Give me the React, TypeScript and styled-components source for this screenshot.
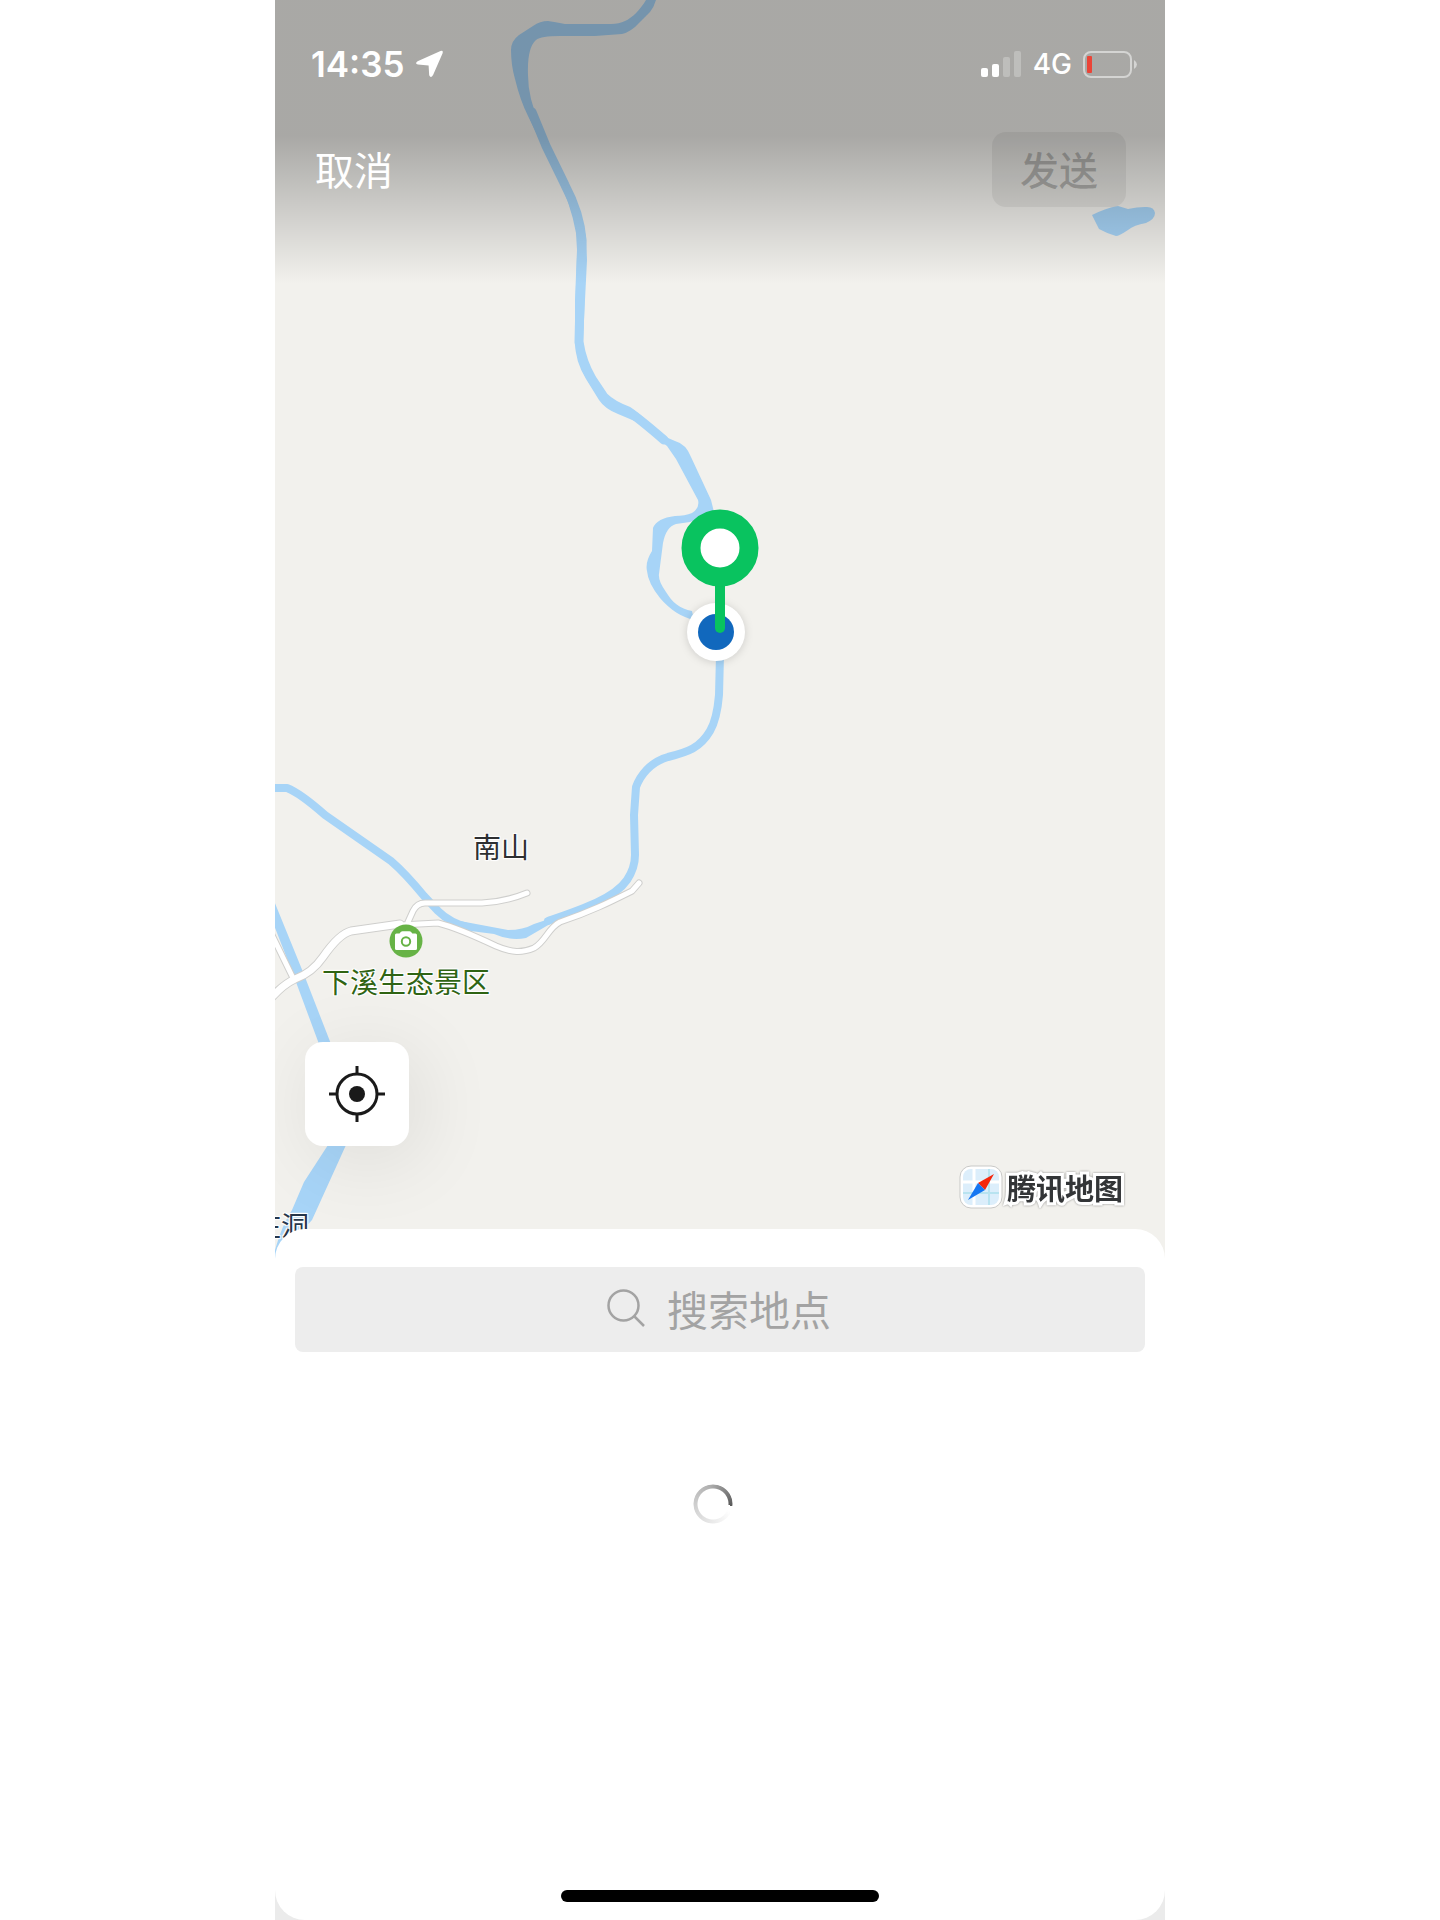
import React from "react";
import styled, { createGlobalStyle, keyframes } from "styled-components";

const GlobalStyle = createGlobalStyle`
  *, *::before, *::after { box-sizing: border-box; }
  body {
    margin: 0;
    background: #fff;
    font-family: Inter, "Noto Sans CJK SC", sans-serif;
    -webkit-font-smoothing: antialiased;
  }
`;

const Screen = styled.main`
  display: flex;
  flex-direction: column;
  width: 100%;
  max-width: 890px;
  min-height: 100vh;
  margin: 0 auto;
  background: #ebebeb;
`;

const MapView = styled.section`
  position: relative;
  display: flex;
  flex-direction: column;
  justify-content: space-between;
  height: 1264px;
  overflow: hidden;
  background: #f2f1ed;
`;

const Terrain = styled.svg`
  position: absolute;
  inset: 0;
  width: 100%;
  height: 100%;
`;

const Header = styled.header`
  position: relative;
  height: 286px;
  padding: 44px 39px 0 36px;
  background: linear-gradient(rgba(0, 0, 0, 0.3) 136px, rgba(0, 0, 0, 0) 284px);
  color: #fff;
`;

const StatusBar = styled.div`
  display: flex;
  align-items: center;
  justify-content: space-between;
  height: 40px;
  margin-right: -11px;
`;

const StatusGroup = styled.div`
  display: flex;
  align-items: center;
  gap: 11px;
`;

const Clock = styled.time`
  font-size: 35px;
  font-weight: 600;
  line-height: 40px;
`;

const Network = styled.span`
  font-size: 28px;
  font-weight: 500;
  line-height: 40px;
`;

const NavBar = styled.nav`
  display: flex;
  align-items: center;
  justify-content: space-between;
  margin-top: 48px;
`;

const NavButton = styled.button<{ $filled?: boolean }>`
  height: 75px;
  padding: 0 ${(p) => (p.$filled ? 28 : 4)}px 4px;
  border: 0;
  border-radius: 14px;
  background: ${(p) => (p.$filled ? "rgba(0, 0, 0, 0.06)" : "transparent")};
  color: ${(p) => (p.$filled ? "rgba(0, 0, 0, 0.22)" : "#fff")};
  font-family: "Noto Sans CJK SC", sans-serif;
  font-size: 39px;
  font-weight: ${(p) => (p.$filled ? 500 : 400)};
  line-height: 56px;
`;

const Place = styled.div<{ $x: number; $y: number; $color: string }>`
  position: absolute;
  left: ${(p) => p.$x}px;
  top: ${(p) => p.$y}px;
  display: flex;
  flex-direction: column;
  align-items: center;
  gap: 3px;
  color: ${(p) => p.$color};
  font-family: "Noto Sans CJK SC", sans-serif;
  font-size: 28px;
  line-height: 40px;
  white-space: nowrap;
  text-shadow: 0 0 2px #fff, 1px 1px 1px #fff, -1px -1px 1px #fff,
    1px -1px 1px #fff, -1px 1px 1px #fff;
  transform: translateX(-50%);
`;

const Marker = styled.svg`
  position: absolute;
  left: 50%;
  top: 500px;
  overflow: visible;
  transform: translateX(-50%);
`;

const MapFooter = styled.div`
  position: relative;
  display: flex;
  align-items: flex-end;
  justify-content: space-between;
  padding: 0 42px 55px 30px;
`;

const LocateButton = styled.button`
  display: grid;
  place-items: center;
  width: 104px;
  height: 104px;
  margin-bottom: 63px;
  padding: 0;
  border: 0;
  border-radius: 18px;
  background: #fff;
  box-shadow: 10px 12px 80px rgba(0, 0, 0, 0.09);
`;

const Brand = styled.div`
  display: flex;
  align-items: center;
  gap: 4px;
  color: #333537;
  font-family: "Noto Sans CJK SC", sans-serif;
  font-size: 29px;
  font-weight: 700;
  line-height: 44px;
`;

const BrandName = styled.span`
  paint-order: stroke fill;
  -webkit-text-stroke: 6px #fff;
  filter: drop-shadow(0 0 1px rgba(0, 0, 0, 0.4));
`;

const Sheet = styled.section`
  position: relative;
  display: flex;
  flex: 1;
  flex-direction: column;
  margin-top: -35px;
  padding: 38px 20px 18px;
  border-radius: 30px;
  background: #fff;
`;

const SearchBar = styled.label`
  display: flex;
  align-items: center;
  justify-content: center;
  gap: 22px;
  height: 85px;
  padding-bottom: 4px;
  border-radius: 8px;
  background: #ededed;
`;

const SearchInput = styled.input`
  width: 166px;
  padding: 0;
  border: 0;
  outline: 0;
  background: transparent;
  color: #1a1a1a;
  font-family: "Noto Sans CJK SC", sans-serif;
  font-size: 41px;
  line-height: 60px;
  &::placeholder {
    color: #a3a3a3;
    opacity: 1;
  }
`;

const Loading = styled.div`
  display: flex;
  flex: 1;
  justify-content: center;
  padding: 132px 14px 0 0;
`;

const spin = keyframes`
  to { transform: rotate(1turn); }
`;

const Spinner = styled.span`
  width: 40px;
  height: 40px;
  border-radius: 50%;
  background: conic-gradient(
    from 95deg,
    rgba(100, 100, 100, 0) 5%,
    rgba(100, 100, 100, 0.25) 40%,
    rgba(100, 100, 100, 0.5) 70%,
    rgba(90, 90, 90, 1) 100%
  );
  mask: radial-gradient(circle, transparent 15px, #000 16px, #000 19px, transparent 20px);
  animation: ${spin} 1s linear infinite paused;
`;

const HomeIndicator = styled.div`
  align-self: center;
  width: 318px;
  height: 12px;
  border-radius: 6px;
  background: #000;
`;

const river = "#a7d4f7";

const streams = [
  { d: "M532 112 L546 146 L565 185 Q580 213 582 240 L580 300 L579 342 Q582 362 592 379 L604 397 Q612 405 628 411 Q641 420 664 440", w: 9 },
  { d: "M720 655 L719 695 Q717 719 710 731 C700 748 688 752 668 757 C650 762 640 776 636 787 L634 815 L635 855 Q635 868 627 880 C614 899 580 910 548 921", w: 8 },
  { d: "M272 788 L287 788 Q300 793 325 815 L391 861 Q405 873 424 896 L438 911 Q450 923 470 928", w: 8 },
];

const roads = [
  { d: "M408 922 L413 911 Q417 903 425 903 L482 903 Q505 902 527 893", w: 5 },
  {
    d: "M400 925 L438 923 Q458 928 496 946 C512 953 522 953 534 948 C546 941 548 928 560 922 C590 912 610 902 632 891 L639 883",
    w: 5,
  },
  { d: "M272 935 L293 978", w: 5 },
  {
    d: "M272 997 Q284 984 295 979 Q312 973 323 957 Q339 934 351 931 L400 924",
    w: 7,
  },
];

const Landscape = () => (
  <Terrain viewBox="275 0 890 1264" preserveAspectRatio="xMidYMin slice" aria-hidden="true">
    <g fill={river}>
      <path d="M646 0 C640 10 632 18 625 21 Q619 24 611 24 L565 24 Q555 22 548 21 Q540 21 533 26 L519 35 Q511 41 511 50 Q511 65 515 79 Q520 100 528 116 L556 174 Q571 204 576 233 L577 250 L575 300 L575 342 Q575 361 586 379 L599 400 Q605 409 618 414 L637 422 Q649 432 667 446 L676 459 L698 500 Q700 508 692 513 Q685 516 675 516 Q657 518 653 528 L652 551 Q645 562 647 571 Q648 583 660 598 C670 610 682 617 694 620 L692 611 C680 609 672 602 666 592 Q658 581 659 574 L663 543 Q666 527 676 524 L690 522 L714 512 L711 500 L691 457 Q686 444 675 441 L668 438 L648 422 Q634 408 626 407 Q613 405 605 395 L595 380 L584 358 L583 340 L585 300 L587 260 L586 236 Q580 213 568 190 L540 125 Q528 98 528 75 Q527 48 536 40 Q541 36 560 36 L595 36 L622 34 Q631 32 640 22 L650 12 Q654 7 656 0 Z" />
      <path d="M1092 215 Q1106 208 1118 206 L1128 209 Q1137 207 1145 207 Q1154 206 1155 213 Q1155 219 1146 223 Q1134 225 1128 230 Q1119 236 1116 236 Q1106 233 1099 229 Z" />
      <path d="M550 924 L526 938 Q510 941 494 934 L463 930 L460 921 L508 930 Q523 930 534 924 L549 919 Z" />
      <path d="M272 896 L303 972 L331 1044 L319 1044 L293 974 L272 920 Z" />
      <path d="M328 1145 L346 1145 L312 1220 Q286 1248 275 1262 L275 1250 Q282 1225 292 1210 L304 1182 Z" />
    </g>
    <g fill="none" stroke={river} strokeLinecap="round" strokeLinejoin="round">
      {streams.map((s) => (
        <path key={s.d} d={s.d} strokeWidth={s.w} />
      ))}
    </g>
    <g fill="none" strokeLinecap="round" strokeLinejoin="round">
      {roads.map((r) => (
        <path key={r.d} d={r.d} stroke="#cfcfcd" strokeWidth={r.w + 2} />
      ))}
      {roads.map((r) => (
        <path key={r.d} d={r.d} stroke="#fff" strokeWidth={r.w} />
      ))}
    </g>
  </Terrain>
);

const LocationArrow = () => (
  <svg width="27" height="28" viewBox="0 0 27 28" aria-hidden="true">
    <path
      d="M24.500 1.100 Q27.400 0 26.600 3.200 L17.200 24.800 Q14.800 29 13.200 25.200 L12.600 15.600 L2 14.600 Q-1.600 13.600 1.600 11.300 Z"
      fill="#fff"
    />
  </svg>
);

const Signal = () => (
  <svg width="41" height="27" viewBox="0 0 41 27" fill="#fff" aria-label="Signal">
    <rect x="0" y="17" width="7" height="9" rx="2" />
    <rect x="11" y="13" width="7" height="13" rx="2" />
    <rect x="22" y="6" width="7" height="20" rx="2" opacity="0.25" />
    <rect x="33" y="0" width="7" height="26" rx="2" opacity="0.25" />
  </svg>
);

const Battery = () => (
  <svg width="54" height="27" viewBox="0 0 54 27" aria-label="Battery low">
    <rect x="1" y="1" width="47" height="25" rx="7" fill="none" stroke="#fff" strokeOpacity="0.5" strokeWidth="2" />
    <rect x="4" y="5" width="5" height="17" rx="1" fill="#eb4437" />
    <path d="M51 9 Q54 11 54 13.500 Q54 16 51 18 Z" fill="#fff" fillOpacity="0.5" />
  </svg>
);

const CameraBadge = () => (
  <svg width="34" height="34" viewBox="0 0 34 34" aria-hidden="true">
    <circle cx="17" cy="17" r="16.500" fill="#67b346" />
    <path
      d="M7.500 9.500 H10.500 Q12 7.300 13.500 7.300 H20.500 Q22 7.300 23.300 9.500 H26.500 Q28 9.500 28 11 V24.500 Q28 26 26.500 26 H7.500 Q6 26 6 24.500 V11 Q6 9.500 7.500 9.500 Z"
      fill="#fff"
    />
    <circle cx="17" cy="17.500" r="4.200" fill="none" stroke="#67b346" strokeWidth="2" />
  </svg>
);

const CompassLogo = () => (
  <svg width="44" height="44" viewBox="0 0 44 44" aria-hidden="true">
    <rect x="1" y="1" width="42" height="42" rx="11" fill="#fff" stroke="#c9c9c7" />
    <clipPath id="tile">
      <rect x="4" y="4" width="36" height="36" rx="8" />
    </clipPath>
    <g clipPath="url(#tile)">
      <rect x="4" y="4" width="36" height="36" fill="#dceefb" />
      <path d="M15 4 V40 M4 17 H40" stroke="#fff" strokeWidth="3" />
      <path d="M30 4 V40 M4 28 H40" stroke="#b8e3f0" strokeWidth="2" />
    </g>
    <path d="M35 9 L26 25 L19 18 Z" fill="#f5260c" />
    <path d="M9 35 L19 18 L26 25 Z" fill="#1677f2" />
  </svg>
);

export default function App() {
  return (
    <>
      <GlobalStyle />
      <Screen>
        <MapView>
          <Landscape />
          <Place $x={226} $y={826} $color="#2d2f31">南山</Place>
          <Place $x={131} $y={924} $color="#2f6413">
            <CameraBadge />
            下溪生态景区
          </Place>
          <Place $x={6} $y={1205} $color="#26364a">庄洞</Place>
          <Marker width="90" height="170" viewBox="675 500 90 170" role="img" aria-label="Selected location">
            <circle cx="716" cy="632" r="29" fill="#fff" filter="drop-shadow(0 1px 4px rgba(0,0,0,0.15))" />
            <circle cx="716" cy="632" r="18" fill="#1168bd" />
            <path d="M720 580 V628" stroke="#09c35f" strokeWidth="10" strokeLinecap="round" />
            <circle cx="720" cy="548" r="29" fill="#fff" stroke="#09c35f" strokeWidth="19" />
          </Marker>
          <Header>
            <StatusBar>
              <StatusGroup>
                <Clock>14:35</Clock>
                <LocationArrow />
              </StatusGroup>
              <StatusGroup>
                <Signal />
                <Network>4G</Network>
                <Battery />
              </StatusGroup>
            </StatusBar>
            <NavBar>
              <NavButton type="button">取消</NavButton>
              <NavButton type="button" $filled disabled>
                发送
              </NavButton>
            </NavBar>
          </Header>
          <MapFooter>
            <LocateButton type="button" aria-label="Locate me">
              <svg width="56" height="56" viewBox="0 0 56 56" fill="none" stroke="#1a1a1a" strokeWidth="3">
                <circle cx="28" cy="28" r="20" />
                <circle cx="28" cy="28" r="8" fill="#1a1a1a" stroke="none" />
                <path d="M28 0 V8 M28 48 V56 M0 28 H8 M48 28 H56" />
              </svg>
            </LocateButton>
            <Brand>
              <CompassLogo />
              <BrandName>腾讯地图</BrandName>
            </Brand>
          </MapFooter>
        </MapView>
        <Sheet>
          <SearchBar>
            <svg width="38" height="38" viewBox="0 0 38 38" fill="none" stroke="#a3a3a3" strokeWidth="2.500" aria-hidden="true">
              <circle cx="16.500" cy="16.500" r="15" />
              <path d="M27 27 L37 37" />
            </svg>
            <SearchInput type="text" placeholder="搜索地点" aria-label="搜索地点" />
          </SearchBar>
          <Loading>
            <Spinner role="status" aria-label="Loading" />
          </Loading>
          <HomeIndicator />
        </Sheet>
      </Screen>
    </>
  );
}
